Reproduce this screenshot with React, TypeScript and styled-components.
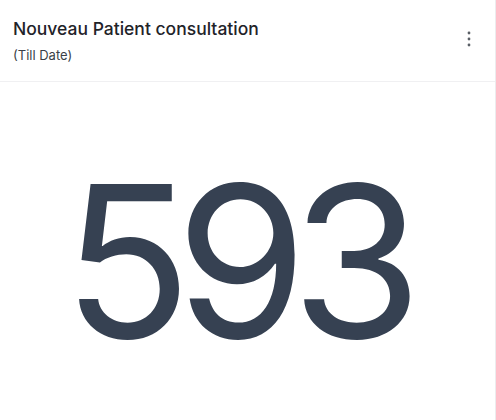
import styled, { createGlobalStyle } from 'styled-components';

const GlobalStyle = createGlobalStyle`
    html, body {
        margin: 0;
        padding: 0;
        background: #ffffff;
        font-family: Inter, "Noto Sans", sans-serif;
    }
`

const Card = styled.section`
    display: flex;
    flex-direction: column;
    width: 496px;
    height: 420px;
    box-sizing: border-box;
    background: #ffffff;
    border-right: 1px solid #ececee;
`

const CardHeader = styled.header`
    display: flex;
    justify-content: space-between;
    align-items: flex-start;
    height: 82px;
    box-sizing: border-box;
    padding: 18px 18px 0 13px;
    border-bottom: 1px solid #f0f0f2;
`

const Title = styled.h2`
    margin: 0;
    font-size: 17.5px;
    font-weight: 500;
    line-height: 22px;
    color: #1f2329;
`

const Subtitle = styled.p`
    margin: 7px 0 0;
    font-size: 13px;
    line-height: 16px;
    color: #3a3f47;
`

const MenuButton = styled.button`
    display: flex;
    align-items: center;
    justify-content: center;
    width: 16px;
    height: 24px;
    margin-top: 9px;
    padding: 0;
    border: none;
    background: none;
    color: #5a5f66;
`

const CardBody = styled.div`
    flex: 1;
    display: flex;
    align-items: center;
    justify-content: center;
    padding-top: 20px;
`

const BigNumber = styled.span`
    font-size: 212px;
    font-weight: 400;
    line-height: 1;
    color: #364152;
    letter-spacing: -16px;
    margin-right: 26px;
`

const App = () => {
    return (
        <>
            <GlobalStyle />
            <Card>
                <CardHeader>
                    <div>
                        <Title>Nouveau Patient consultation</Title>
                        <Subtitle>(Till Date)</Subtitle>
                    </div>
                    <MenuButton aria-label="menu">
                        <svg width="4" height="16" viewBox="0 0 4 16" fill="currentColor">
                            <circle cx="2" cy="2" r="1.4" />
                            <circle cx="2" cy="8" r="1.4" />
                            <circle cx="2" cy="14" r="1.4" />
                        </svg>
                    </MenuButton>
                </CardHeader>
                <CardBody>
                    <BigNumber>593</BigNumber>
                </CardBody>
            </Card>
        </>
    );
}

export default App;
